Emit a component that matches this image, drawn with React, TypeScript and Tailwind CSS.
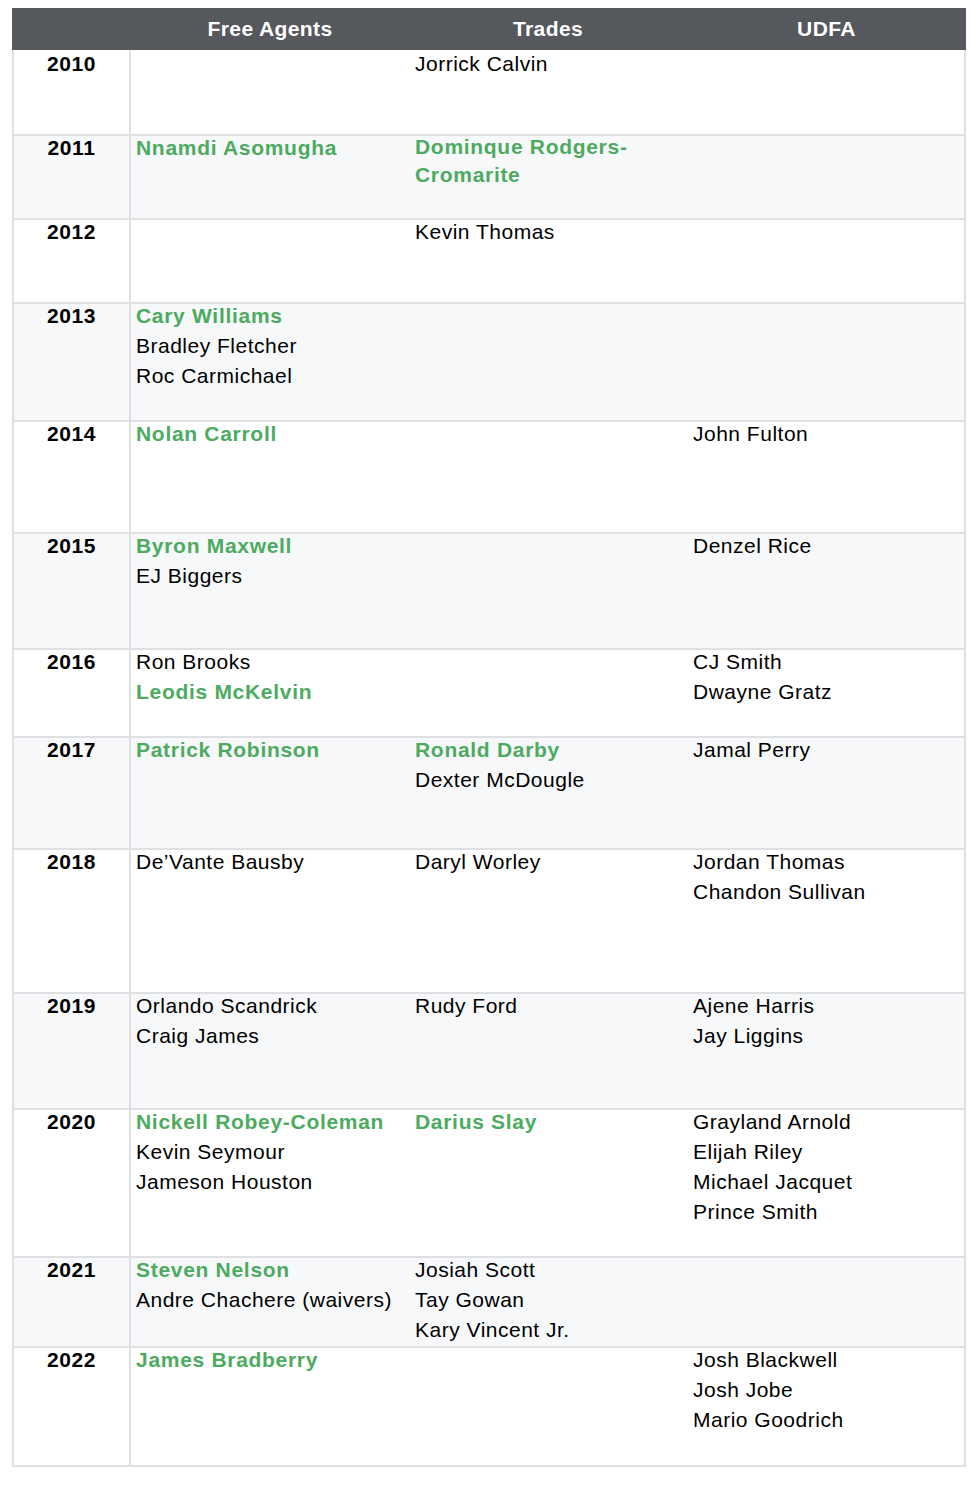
type Name = { text: string; star?: boolean; tight?: boolean }

type Row = {
  year: string
  h: string
  fa: Name[]
  trades: Name[]
  udfa: Name[]
}

const g = (text: string): Name => ({ text, star: true })
const n = (text: string): Name => ({ text })

const rows: Row[] = [
  { year: '2010', h: 'h-[86px]', fa: [], trades: [n('Jorrick Calvin')], udfa: [] },
  {
    year: '2011',
    h: 'h-[84px]',
    fa: [g('Nnamdi Asomugha')],
    trades: [{ text: 'Dominque Rodgers-Cromarite', star: true, tight: true }],
    udfa: [],
  },
  { year: '2012', h: 'h-[84px]', fa: [], trades: [n('Kevin Thomas')], udfa: [] },
  { year: '2013', h: 'h-[118px]', fa: [g('Cary Williams'), n('Bradley Fletcher'), n('Roc Carmichael')], trades: [], udfa: [] },
  { year: '2014', h: 'h-[112px]', fa: [g('Nolan Carroll')], trades: [], udfa: [n('John Fulton')] },
  { year: '2015', h: 'h-[116px]', fa: [g('Byron Maxwell'), n('EJ Biggers')], trades: [], udfa: [n('Denzel Rice')] },
  { year: '2016', h: 'h-[88px]', fa: [n('Ron Brooks'), g('Leodis McKelvin')], trades: [], udfa: [n('CJ Smith'), n('Dwayne Gratz')] },
  { year: '2017', h: 'h-[112px]', fa: [g('Patrick Robinson')], trades: [g('Ronald Darby'), n('Dexter McDougle')], udfa: [n('Jamal Perry')] },
  { year: '2018', h: 'h-[144px]', fa: [n('De\u2019Vante Bausby')], trades: [n('Daryl Worley')], udfa: [n('Jordan Thomas'), n('Chandon Sullivan')] },
  { year: '2019', h: 'h-[116px]', fa: [n('Orlando Scandrick'), n('Craig James')], trades: [n('Rudy Ford')], udfa: [n('Ajene Harris'), n('Jay Liggins')] },
  {
    year: '2020',
    h: 'h-[148px]',
    fa: [g('Nickell Robey-Coleman'), n('Kevin Seymour'), n('Jameson Houston')],
    trades: [g('Darius Slay')],
    udfa: [n('Grayland Arnold'), n('Elijah Riley'), n('Michael Jacquet'), n('Prince Smith')],
  },
  {
    year: '2021',
    h: 'h-[90px]',
    fa: [g('Steven Nelson'), n('Andre Chachere (waivers)')],
    trades: [n('Josiah Scott'), n('Tay Gowan'), n('Kary Vincent Jr.')],
    udfa: [],
  },
  { year: '2022', h: 'h-[119px]', fa: [g('James Bradberry')], trades: [], udfa: [n('Josh Blackwell'), n('Josh Jobe'), n('Mario Goodrich')] },
]

function Cell({ names, className }: { names: Name[]; className?: string }) {
  return (
    <div className={className}>
      {names.map((p) => (
        <div
          key={p.text}
          className={
            p.star
              ? `font-bold text-[#4cab5f] w-[250px] tracking-[0.7px] ${p.tight ? 'leading-[28px]' : ''}`
              : 'text-black'
          }
        >
          {p.text}
        </div>
      ))}
    </div>
  )
}

export default function App() {
  return (
    <div
      className="bg-white min-h-[1486px] pt-[8px] pl-[12px] text-[21px] leading-[30px] tracking-[0.5px]"
      style={{ fontFamily: '"Liberation Sans", Arial, sans-serif' }}
    >
      <div className="w-[954px]">
        <div className="grid grid-cols-[119px_278px_278px_1fr] h-[42px] items-center bg-[#55585c] text-white font-bold tracking-[0.4px]">
          <div />
          <div className="text-center">Free Agents</div>
          <div className="text-center">Trades</div>
          <div className="text-center">UDFA</div>
        </div>
        <div className="border-l-2 border-r-2 border-[#dfe0e3]">
          {rows.map((r, i) => {
            const shift = i === 0 ? '-mt-[1px]' : '-mt-[3px]'
            return (
              <div
                key={r.year}
                className={`grid grid-cols-[117px_278px_278px_1fr] border-b-2 border-[#dfe0e3] ${r.h} ${
                  i % 2 === 1 ? 'bg-[#f7f8fa]' : 'bg-white'
                }`}
              >
                <div className="border-r-2 border-[#dfe0e3] text-center font-bold text-black tracking-[0.6px]">
                  <div className={shift}>{r.year}</div>
                </div>
                <Cell names={r.fa} className={`pl-[5px] ${shift}`} />
                <Cell names={r.trades} className={`pl-[6px] ${shift}`} />
                <Cell names={r.udfa} className={`pl-[6px] ${shift}`} />
              </div>
            )
          })}
        </div>
      </div>
    </div>
  )
}
